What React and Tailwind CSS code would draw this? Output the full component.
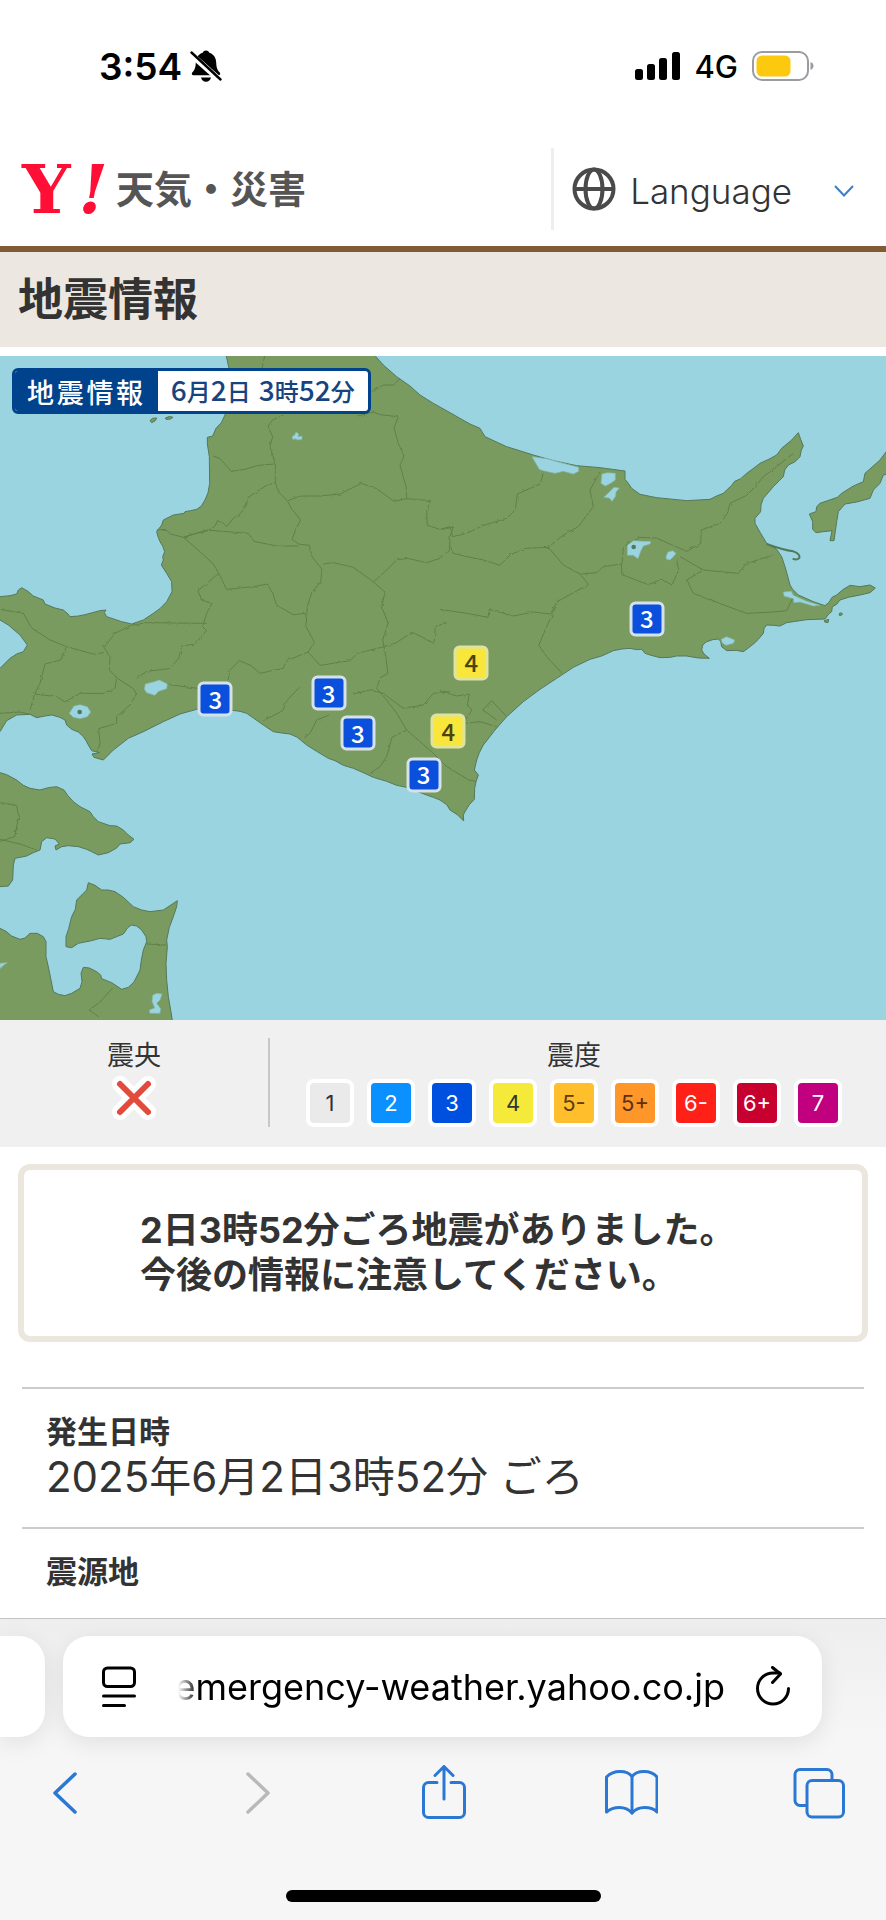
const scale = [
  { label: "1", className: "bg-[#eaeaea] text-[#333]" },
  { label: "2", className: "bg-[#0a90ff] text-white" },
  { label: "3", className: "bg-[#0050e0] text-white" },
  { label: "4", className: "bg-[#f5e93a] text-[#333]" },
  { label: "5-", className: "bg-[#ffbf2d] text-[#5c3c10]" },
  { label: "5+", className: "bg-[#ff9629] text-[#5c3010]" },
  { label: "6-", className: "bg-[#ff2018] text-white" },
  { label: "6+", className: "bg-[#c8002f] text-white" },
  { label: "7", className: "bg-[#c0007f] text-white" },
];

// x / y are percentages of the map box
const pins = [
  { x: 24.3, y: 51.7, level: 3 },
  { x: 37.1, y: 50.8, level: 3 },
  { x: 40.4, y: 56.8, level: 3 },
  { x: 47.8, y: 63.1, level: 3 },
  { x: 73.0, y: 39.6, level: 3 },
  { x: 53.2, y: 46.2, level: 4 },
  { x: 50.6, y: 56.5, level: 4 },
];

const land = [
  // Hokkaido
  "M675 30L688 90L690 130L682 200L675 225L664 248L648 265L638 288L622 292L622 312L628 350L629 430L624 458L615 480L604 498L590 508L572 512L555 515L552 520L520 525L490 540L485 555L470 575L474 590L480 605L488 618L494 635L488 650L490 660L484 675L500 700L515 725L516 755L500 785L482 804L460 820L430 840L395 852L365 845L320 830L313 818L318 810L300 812L270 820L255 824L235 828L210 830L204 822L190 810L165 804L135 792L130 780L100 768L84 754L65 743L55 750L50 762L30 767L0 770L-20 770L-20 835L0 840L25 855L60 885L82 915L70 935L50 942L30 955L0 985L-20 1000L-20 1190L0 1175L20 1142L50 1125L90 1123L110 1133L135 1128L155 1125L180 1132L195 1140L200 1155L215 1168L235 1176L250 1190L258 1202L265 1215L275 1232L298 1238L276 1242L282 1252L310 1260L340 1230L385 1195L430 1175L490 1145L540 1122L590 1108L640 1104L690 1110L720 1114L740 1120L790 1155L820 1175L845 1179L870 1182L892 1192L920 1215L950 1234L985 1255L1005 1262L1030 1276L1060 1285L1090 1298L1120 1312L1160 1324L1190 1336L1220 1342L1280 1365L1300 1372L1320 1380L1340 1394L1350 1410L1372 1424L1391 1443L1390 1425L1395 1415L1408 1394L1423 1378L1424 1345L1428 1325L1435 1305L1423 1290L1430 1260L1438 1238L1450 1215L1485 1170L1520 1130L1570 1085L1620 1048L1670 1015L1720 982L1770 958L1805 948L1840 932L1865 927L1890 925L1910 929L1925 928L1935 940L1950 945L1980 953L2010 952L2030 948L2060 948L2095 954L2128 955L2112 942L2105 930L2108 916L2118 906L2138 899L2155 897L2162 904L2165 920L2180 932L2208 931L2230 935L2245 924L2265 908L2275 898L2290 880L2292 866L2300 855L2320 856L2340 858L2360 848L2380 845L2420 839L2475 837L2486 822L2495 815L2497 800L2510 793L2520 780L2545 772L2580 765L2610 758L2626 744L2610 735L2580 740L2550 736L2530 748L2510 765L2496 772L2488 786L2475 797L2440 785L2395 765L2378 748L2370 735L2362 705L2355 680L2345 650L2330 628L2300 610L2282 580L2265 550L2265 535L2282 515L2283 495L2290 475L2320 440L2338 422L2350 410L2354 390L2365 375L2384 366L2400 350L2404 330L2410 318L2402 298L2395 278L2375 300L2345 325L2330 345L2310 356L2280 370L2262 384L2240 400L2222 416L2204 424L2195 436L2170 460L2150 468L2130 478L2060 482L1970 473L1920 463L1895 445L1885 430L1875 418L1875 393L1800 383L1730 377L1660 362L1600 345L1520 320L1455 290L1440 265L1410 252L1385 238L1350 218L1300 190L1260 165L1230 138L1190 110L1150 75L1110 30Z",
  // Kunashiri
  "M2670 320L2640 360L2595 400L2590 425L2560 438L2525 460L2512 472L2460 490L2450 500L2448 515L2428 522L2438 545L2438 568L2448 578L2470 575L2496 572L2490 602L2502 602L2510 545L2515 515L2535 492L2570 486L2610 475L2620 450L2640 430L2650 405L2670 400Z",
  // Oshima peninsula
  "M-20 1294L0 1298L20 1304L50 1320L70 1336L90 1345L120 1350L145 1343L170 1340L192 1350L202 1365L220 1385L240 1400L270 1415L280 1430L295 1445L330 1457L350 1458L370 1470L385 1485L402 1498L390 1508L360 1512L350 1524L325 1538L295 1545L275 1535L260 1528L235 1520L205 1517L185 1520L168 1530L165 1518L178 1512L165 1497L140 1493L125 1505L120 1530L100 1538L80 1548L45 1555L40 1575L38 1620L25 1638L0 1640L-20 1640Z",
  // Aomori
  "M-20 1760L0 1765L18 1774L35 1788L60 1798L75 1794L90 1780L112 1780L130 1790L138 1805L138 1850L144 1876L150 1905L160 1955L175 1963L195 1967L215 1960L240 1945L246 1925L243 1900L250 1882L268 1884L290 1895L302 1905L305 1916L335 1928L365 1948L385 1942L402 1926L420 1890L424 1860L430 1830L440 1805L438 1790L425 1770L410 1758L395 1755L384 1762L370 1782L330 1798L300 1795L275 1802L235 1810L215 1823L198 1820L198 1790L206 1766L215 1730L226 1708L230 1680L250 1660L260 1650L265 1628L285 1636L305 1650L325 1650L345 1655L370 1672L400 1700L425 1710L450 1715L490 1710L532 1682L530 1700L520 1730L508 1762L500 1800L502 1820L498 1870L500 1920L505 1970L512 2010L520 2060L-20 2060Z",
  // small islands
  "M450 242Q455 232 470 234Q468 244 455 248ZM496 234Q508 226 519 232Q512 240 498 238Z",
  "M2518 820Q2524 816 2528 822Q2524 828 2518 826ZM2473 842L2486 838L2484 848L2474 846Z",
];

const lakes = [
  "M876 290L884 285L888 276L896 282L894 290L906 288L906 298L894 300L884 296L880 300Z",
  "M1596 350L1640 356L1690 370L1736 382L1736 394L1720 402L1690 394L1665 400L1630 392L1618 388Z",
  "M1806 402L1822 398L1846 400L1846 420L1832 430L1816 438L1803 430Z",
  "M1812 472L1828 456L1842 442L1858 444L1848 456L1846 470L1836 484L1828 474Z",
  "M1882 616L1900 602L1930 604L1952 604L1950 612L1930 618L1922 634L1914 656L1900 646L1882 646Z",
  "M1998 650L2004 636L2018 632L2028 640L2020 650L2010 660L2000 658Z",
  "M433 1048L436 1032L460 1026L478 1020L502 1032L500 1046L476 1054L464 1066L440 1058Z",
  "M208 1120L222 1098L240 1094L262 1100L272 1116L262 1130L240 1136L220 1132Z",
  "M2164 898L2180 890L2204 900L2200 910L2178 916L2166 908Z",
  "M2350 756L2374 754L2380 766L2420 784L2460 796L2440 798L2400 786L2382 788L2380 776L2352 768Z",
  "M458 1966L470 1960L486 1962L480 1980L470 1990L482 2006L480 2020L450 2020L448 2010L464 2004L456 1984Z",
  "M0 1870L22 1868L10 1876L0 1886Z",
];

const districts = [
  "M470 570L495 568L512 582L550 592L590 580L625 572L645 558L652 542L668 548L680 560L700 535L722 520L740 495L742 474L770 455L800 436L826 428",
  "M826 428L838 458L862 482L876 508L902 540L888 566L876 598L896 612L928 616L936 650L966 688L962 726L936 756L922 800L918 860L944 908L924 936",
  "M640 348L660 356L694 394L735 388L775 376L822 372",
  "M850 225L818 240L804 258L818 290L810 320L826 372L826 428",
  "M794 48L786 84",
  "M1115 155L1150 135L1180 135L1200 116",
  "M1072 228L1120 216L1140 224L1195 230L1182 264L1195 310L1212 348L1200 376L1218 440L1220 476L1292 482L1280 512L1282 556L1320 568L1360 562L1350 590L1348 632L1320 655L1280 668L1222 655L1190 660L1160 690L1120 726",
  "M864 482L900 468L960 468L1020 462L1084 430L1130 446L1182 484L1220 476",
  "M550 592L620 570L680 575L745 580L762 604L830 618L896 618",
  "M550 592L590 626L640 672L656 700L680 748L760 740L802 732L818 760L830 796L880 824L918 820",
  "M656 700L620 730L594 752L604 780L636 790L620 820L608 860L620 872L584 912L545 918L536 956L508 986L440 994L410 1015",
  "M970 672L1000 668L1060 682L1120 726L1155 756L1145 800L1164 850L1148 900L1152 920",
  "M394 856L345 880L312 922L330 950L328 990L350 1012L345 1045L310 1060L240 1060L195 1086L170 1070L104 1062L90 1110",
  "M395 856L440 848L620 850",
  "M0 808L70 820L95 864L150 900L200 920L280 942L312 938",
  "M200 920L182 960L135 972L120 1030L104 1062",
  "M924 936L860 962L850 985L780 1000L752 976L718 962L690 990L684 1020",
  "M924 936L960 976L1000 970L1050 962L1072 940L1152 920L1158 956L1164 1000L1140 1014L1130 1045L1160 1080L1190 1120L1220 1170L1260 1205L1300 1240L1340 1280L1400 1316L1428 1325",
  "M1152 920L1190 908L1236 876L1302 910L1306 860L1350 845",
  "M1320 808L1400 820L1464 832L1468 808L1540 828L1600 816L1652 822L1670 786L1724 756L1766 734L1740 702L1690 675L1645 622",
  "M1320 568L1350 560L1358 590L1400 580L1450 556L1520 535L1546 510L1552 462L1620 432L1630 400",
  "M1352 620L1360 640L1400 650L1450 660L1500 676L1530 645L1575 625L1645 622L1690 585L1735 560L1780 500L1770 450L1800 396",
  "M1740 702L1790 698L1810 680L1864 672L1866 704L1945 734L1985 718L2016 735L2036 690L2030 656",
  "M1866 672L1870 620L1920 592L1970 594L2010 612L2060 634L2102 610L2104 570L2160 550L2182 520L2190 490L2240 466L2266 440L2290 410L2330 380L2380 340",
  "M2040 650L2110 690L2215 700L2240 670L2320 645",
  "M2110 690L2060 720L2080 760L2120 776L2240 820L2320 816L2360 812L2380 770",
  "M1668 800L1640 860L1616 916L1640 950L1686 1000",
  "M900 1040L862 1080L848 1112L790 1142",
  "M988 1125L950 1140L930 1180L905 1200",
  "M1220 1170L1176 1192L1160 1250L1140 1280L1110 1300",
  "M1060 1062L1110 1050L1150 1060L1210 1105L1270 1095L1300 1060L1350 1055",
  "M1320 1052L1370 1068L1408 1062L1402 1095L1416 1110L1390 1150L1440 1145L1490 1160",
  "M1520 1130L1475 1082L1448 1110L1490 1140",
  "M410 1060L390 1095L350 1130L350 1150L296 1166L300 1210L292 1236",
  "M0 1120L60 1116L94 1124",
  "M480 1030L600 1046",
  "M0 1388L50 1396L56 1430L44 1490L0 1504",
  "M0 1498L60 1512L110 1530",
  "M338 1944L300 1986L268 2010L296 2030",
  "M440 1812L498 1815",
  "M345 1010L400 1046L410 1064",
];

function StatusBar() {
  return (
    <div className="flex h-[132px] items-center justify-between pl-[99px] pr-[72px] text-black">
      <div className="flex items-center gap-2">
        <span className="text-[37px] font-semibold leading-none">3:54</span>
        <svg viewBox="0 0 32 34" className="h-[34px] w-8" aria-hidden="true">
          <path
            d="M16 1.5c1.8 0 3 1 3.3 2.3 4.400 1.300 6.700 5 6.900 9.600.2 5 1 7.300 3.400 9.900 1.100 1.200.6 3-1.100 3H3.500c-1.700 0-2.200-1.800-1.100-3 2.400-2.600 3.200-4.900 3.400-9.900.2-4.600 2.500-8.300 6.900-9.600C13 2.500 14.200 1.500 16 1.500Z"
            fill="currentColor"
          />
          <path d="M11 28.500h10c-.5 2.600-2.400 4.200-5 4.200s-4.500-1.600-5-4.200Z" fill="currentColor" />
          <path d="M0 4.500 31 32" stroke="#fff" strokeWidth="6" />
          <path d="M1.500 3.500 30.500 30.500" stroke="currentColor" strokeWidth="2.400" strokeLinecap="round" />
        </svg>
      </div>

      <div className="flex items-center gap-[14px]">
        <svg viewBox="0 0 45 28" className="h-7 w-[45px]" aria-hidden="true">
          <rect x="0" y="17" width="8" height="11" rx="2.500" />
          <rect x="12" y="12" width="8" height="16" rx="2.500" />
          <rect x="24" y="6" width="8" height="22" rx="2.500" />
          <rect x="37" y="0" width="8" height="28" rx="2.500" />
        </svg>
        <span className="text-[31px] font-medium leading-none">4G</span>
        <svg viewBox="0 0 62 30" className="h-[30px] w-[62px]" aria-hidden="true">
          <rect x="1" y="1" width="55" height="28" rx="9" fill="none" stroke="#9b9ba0" strokeWidth="2" />
          <rect x="4.500" y="4.500" width="34" height="21" rx="5.500" fill="#fdc90e" />
          <path d="M58.500 11c2 .8 3 2.200 3 4s-1 3.200-3 4Z" fill="#9b9ba0" />
        </svg>
      </div>
    </div>
  );
}

function SiteHeader() {
  return (
    <header className="flex items-center justify-between border-b-[6px] border-[#7f5c34] py-4">
      <a href="#top" className="flex items-center gap-2 pl-[22px]" aria-label="Y!天気・災害">
        <span className="flex w-[86px] items-baseline justify-between font-['DejaVu_Serif',serif] text-[68px] font-bold leading-none text-[#ff0f35]">
          <span>Y</span>
          <span className="italic">!</span>
        </span>
        <span className="text-[38px] font-bold leading-none text-[#555]">天気・災害</span>
      </a>

      <button
        type="button"
        className="flex h-[82px] items-center border-l-[3px] border-[#eee] pl-[18px] pr-8"
      >
        <svg
          viewBox="0 0 44 44"
          className="h-11 w-11"
          fill="none"
          stroke="#4a4a4a"
          strokeWidth="4"
          aria-hidden="true"
        >
          <circle cx="22" cy="22" r="19.500" />
          <ellipse cx="22" cy="22" rx="8.500" ry="19.500" />
          <path d="M2.500 22h39" />
        </svg>
        <span className="ml-[14px] pt-1 text-[35px] font-light text-[#333]">Language</span>
        <svg
          viewBox="0 0 20 12"
          className="ml-[42px] mt-1 h-3 w-5"
          fill="none"
          stroke="#3b7fc4"
          strokeWidth="2"
          aria-hidden="true"
        >
          <path d="m1 1 9 9.500L19 1" />
        </svg>
      </button>
    </header>
  );
}

function QuakeMap() {
  return (
    <div className="relative mt-[9px]">
      <svg viewBox="0 48 2658 1992" className="block w-full bg-[#9ad4e1]" role="img" aria-label="震度の地図">
        <defs>
          <filter id="rough" x="-2%" y="-2%" width="104%" height="104%">
            <feTurbulence type="fractalNoise" baseFrequency="0.080" numOctaves="2" seed="4" />
            <feDisplacementMap in="SourceGraphic" scale="8" />
          </filter>
        </defs>
        <g fill="#7a9b5f" stroke="#54785a" strokeWidth="3" strokeLinejoin="round">
          {land.map((d) => (
            <path key={d} d={d} />
          ))}
        </g>
        <g
          fill="none"
          stroke="#5f8048"
          strokeWidth="3"
          strokeLinejoin="round"
          filter="url(#rough)"
        >
          {districts.map((d) => (
            <path key={d} d={d} />
          ))}
        </g>
        <g fill="#9ad4e1" stroke="#83b8ac" strokeWidth="2">
          {lakes.map((d) => (
            <path key={d} d={d} />
          ))}
        </g>
        <g fill="#54785a">
          <circle cx="1901" cy="621" r="7" />
          <circle cx="239" cy="1116" r="7" />
        </g>
        {/* Notsuke sandbar */}
        <path
          d="M2300 612Q2350 630 2380 634Q2402 642 2398 654Q2390 662 2378 656"
          fill="none"
          stroke="#54785a"
          strokeWidth="6"
        />
      </svg>

      <div className="absolute left-3 top-3 flex h-[46px] items-stretch overflow-hidden rounded-md border-[3px] border-[#00438c] bg-white leading-none">
        <span className="flex items-center bg-[#00438c] px-3 font-['Noto_Sans_CJK_JP',sans-serif] text-[27px] font-medium tracking-widest text-white">
          地震情報
        </span>
        <span className="flex items-baseline self-center px-[13px] font-['Noto_Sans_CJK_JP',sans-serif] text-[28px] font-medium text-[#17447f]">
          6<span className="text-2xl">月</span>2<span className="text-2xl">日</span>
          <span className="ml-2">3</span>
          <span className="text-2xl">時</span>52<span className="text-2xl">分</span>
        </span>
      </div>

      {pins.map((pin) => (
        <span
          key={`${pin.x}-${pin.y}`}
          style={{ left: `${pin.x}%`, top: `${pin.y}%` }}
          className={`absolute flex h-[35px] w-[35px] -translate-x-1/2 -translate-y-1/2 items-center justify-center rounded-md border-[3px] pb-0.5 text-2xl leading-none font-['Noto_Sans_CJK_JP',sans-serif] font-medium ${
            pin.level === 4
              ? "border-[#dfe3a0] bg-[#f9e63a] text-[#4a4410]"
              : "border-[#d5e2ec] bg-[#0a50dc] text-white"
          }`}
        >
          {pin.level}
        </span>
      ))}
    </div>
  );
}

function Legend() {
  return (
    <div className="flex bg-[#f0f0f0] pb-5 pt-[18px] text-[#333]">
      <div className="flex w-[270px] flex-col items-center border-r-2 border-[#c8c8c8]">
        <span className="text-[27px] leading-[36px]">震央</span>
        <svg viewBox="0 0 48 48" className="h-12 w-12" strokeLinecap="round" aria-hidden="true">
          <path d="M10 10 38 38M38 10 10 38" stroke="#fff" strokeWidth="16" />
          <path d="M10 10 38 38M38 10 10 38" stroke="#e24b3c" strokeWidth="6" />
        </svg>
      </div>
      <div className="flex flex-1 flex-col items-center pr-2">
        <span className="text-[27px] leading-[36px]">震度</span>
        <ul className="mt-[5px] flex gap-[13px]">
          {scale.map((s) => (
            <li
              key={s.label}
              className={`flex h-12 w-12 items-center justify-center rounded-lg border-4 border-white text-[22px] leading-none ${s.className}`}
            >
              {s.label}
            </li>
          ))}
        </ul>
      </div>
    </div>
  );
}

function BrowserBar() {
  const iconClass = "h-[54px] w-[54px]";
  const blue = "#2a78d4";

  return (
    <footer className="mt-auto border-t border-[#c4c4c4] bg-[#f6f6f6] pb-[18px]">
      <div className="flex gap-[18px] bg-linear-to-b from-[#eeeeee] to-[#f6f6f6] pr-16 pt-[17px]">
        <div className="h-[101px] w-[45px] shrink-0 rounded-r-[26px] bg-white shadow-[0_6px_24px_rgba(0,0,0,0.09)]" />
        <div className="flex h-[101px] min-w-0 flex-1 items-center rounded-[26px] bg-white pl-[39px] pr-8 text-black shadow-[0_6px_24px_rgba(0,0,0,0.09)]">
          <button type="button" aria-label="ページメニュー">
            <svg
              viewBox="0 0 34 42"
              className="h-[42px] w-[34px]"
              fill="none"
              stroke="currentColor"
              strokeWidth="3"
              strokeLinecap="round"
              aria-hidden="true"
            >
              <rect x="1.500" y="2" width="31" height="18.500" rx="4" />
              <path d="M1.500 30h31M1.500 39.500h21" />
            </svg>
          </button>
          <input
            type="text"
            aria-label="アドレス"
            defaultValue="emergency-weather.yahoo.co.jp"
            className="ml-8 w-0 min-w-0 flex-1 bg-transparent text-right text-4xl leading-[48px] outline-none [mask-image:linear-gradient(to_right,transparent,transparent_10px,black_30px)]"
          />
          <button type="button" aria-label="再読み込み" className="ml-[31px]">
            <svg
              viewBox="0 0 34 42"
              className="h-[42px] w-[34px]"
              fill="none"
              stroke="currentColor"
              strokeWidth="3"
              strokeLinecap="round"
              strokeLinejoin="round"
              aria-hidden="true"
            >
              <path d="M32.500 22.500A15.500 15.500 0 1 1 17 7h7" />
              <path d="m16.500 1.500 8 6.500-8 8.500" />
            </svg>
          </button>
        </div>
      </div>

      <nav
        className="flex items-center justify-between px-10 pt-7"
        aria-label="ツールバー"
      >
        <button type="button" aria-label="戻る">
          <svg viewBox="0 0 54 54" className={iconClass} fill="none" stroke={blue} strokeWidth="3.500" strokeLinecap="round" strokeLinejoin="round">
            <path d="M35 9 15 28l20 19" />
          </svg>
        </button>
        <button type="button" aria-label="進む">
          <svg viewBox="0 0 54 54" className={iconClass} fill="none" stroke="#b9b9b9" strokeWidth="3.500" strokeLinecap="round" strokeLinejoin="round">
            <path d="m20 9 20 19-20 19" />
          </svg>
        </button>
        <button type="button" aria-label="共有">
          <svg viewBox="0 0 54 54" className={iconClass} fill="none" stroke={blue} strokeWidth="3" strokeLinecap="round" strokeLinejoin="round">
            <path d="M21 17.500h-8.500a5 5 0 0 0-5 5v25a5 5 0 0 0 5 5h31a5 5 0 0 0 5-5v-25a5 5 0 0 0-5-5H35" />
            <path d="M28 34V1.500M19 10.500l9-9 9 9" />
          </svg>
        </button>
        <button type="button" aria-label="ブックマーク">
          <svg viewBox="0 0 54 54" className={iconClass} fill="none" stroke={blue} strokeWidth="3" strokeLinecap="round" strokeLinejoin="round">
            <path d="M28 11.500C25.500 8 21 6.500 16 6.500S6 8.500 2.500 12v35C6 44 10.500 42.500 15.500 42.500S25 44.500 28 48c3-3.500 7.500-5.500 12.500-5.500S50.500 44 53 47V12C50 8.500 45 6.500 40 6.500S30.500 8 28 11.500Z" />
            <path d="M28 11.500V48" />
          </svg>
        </button>
        <button type="button" aria-label="タブ">
          <svg viewBox="0 0 54 54" className={iconClass} fill="none" stroke={blue} strokeWidth="3" strokeLinecap="round" strokeLinejoin="round">
            <path d="M14 40.500H8a5 5 0 0 1-5-5V9.500a5 5 0 0 1 5-5h27a5 5 0 0 1 5 5v6" />
            <rect x="15" y="15.500" width="36.500" height="36.500" rx="5" />
          </svg>
        </button>
      </nav>

      <div className="mx-auto mt-[71px] h-3 w-[315px] rounded-full bg-black" />
    </footer>
  );
}

export default function App() {
  return (
    <div className="flex min-h-screen flex-col bg-white font-['Inter','Noto_Sans_CJK_JP',sans-serif] text-[#333]">
      <StatusBar />
      <SiteHeader />

      <main>
        <h1 className="bg-[#ece7e0] px-[18px] py-5 text-[45px] font-bold leading-[55px]">
          地震情報
        </h1>
        <QuakeMap />
        <Legend />

        <p className="mx-[18px] mt-[17px] rounded-xl border-[6px] border-[#ebe7de] py-[38px] pl-[116px] text-4xl font-bold leading-[45px]">
          2日3時52分ごろ地震がありました。
          <br />
          今後の情報に注意してください。
        </p>

        <dl className="mx-[22px] mt-[45px]">
          <div className="border-t-2 border-[#ccc] px-6 pb-[28px] pt-5">
            <dt className="text-[31px] font-bold leading-[45px]">発生日時</dt>
            <dd className="text-[42px] leading-[45px]">2025年6月2日3時52分 ごろ</dd>
          </div>
          <div className="border-t-2 border-[#ccc] px-6 pb-[21px] pt-5">
            <dt className="text-[31px] font-bold leading-[45px]">震源地</dt>
          </div>
        </dl>
      </main>

      <BrowserBar />
    </div>
  );
}
